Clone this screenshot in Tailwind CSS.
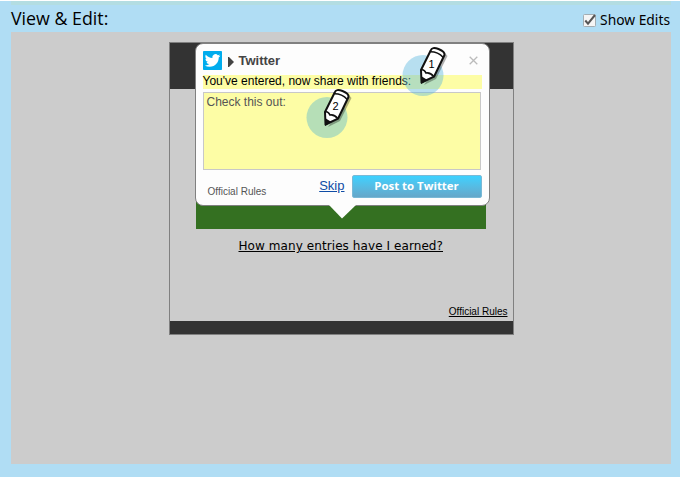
<!DOCTYPE html>
<html lang="en">
<head>
<meta charset="utf-8">
<title>View &amp; Edit</title>
<script src="https://cdn.jsdelivr.net/npm/@tailwindcss/browser@4"></script>
</head>
<body class="h-[477px] w-[681px] overflow-hidden bg-white pt-px text-black">
<main class="h-[476px] w-[680px] bg-[#b0ddf4] pr-[9px] pl-[11px]">
  <div class="h-1 bg-[#b3dde2]"></div>
  <header class="flex h-[27px] items-start justify-between whitespace-nowrap font-['Open_Sans',sans-serif]">
    <h1 class="text-[17.8px] leading-[26px]">View &amp; Edit:</h1>
    <label class="flex items-center gap-[3px] pt-[5px] pr-px font-['Noto_Sans',sans-serif] text-[13.8px] leading-5">
      <svg class="h-[15px] w-[15px]" viewBox="0 0 15 15"><rect x="1.5" y="1.5" width="12" height="12" rx="1" fill="#f5f5f5" stroke="#a3adb2"/><path d="M3.3 7.5 6 10.7 13 2" fill="none" stroke="#555" stroke-width="2"/></svg>
      <span>Show Edits</span>
    </label>
  </header>
  <section class="flex h-[432px] justify-center bg-[#ccc] pt-[10px] pr-[1px]">
    <div class="relative ml-[3px] flex h-[293px] w-[345px] -translate-x-px flex-col border border-[#808080]">
      <div class="h-[46px] shrink-0 bg-[#333]"></div>
      <div class="flex grow flex-col">
        <div class="mt-[104px] ml-[26px] h-[36px] w-[290px] shrink-0 bg-[#347021]"></div>
        <a class="mt-[9px] ml-[69px] whitespace-nowrap font-['DejaVu_Sans',sans-serif] text-[12px] leading-[17px] tracking-[0.08px] underline underline-offset-1">How many entries have I earned?</a>
        <a class="mt-auto mr-[5px] mb-[3px] self-end whitespace-nowrap font-['Liberation_Sans',sans-serif] text-[10px] leading-3 underline">Official Rules</a>
      </div>
      <div class="h-[13px] shrink-0 bg-[#333]"></div>

      <!-- Share bubble -->
      <div class="absolute top-0 left-[25px] flex h-[163px] w-[295px] flex-col rounded-[8px] border border-[#808080] bg-[#fdfdfd] px-[7px] pt-[7px] font-['Liberation_Sans',sans-serif]">
        <div class="flex h-[19px] shrink-0 items-center">
          <svg class="h-[19px] w-[19px]" viewBox="0 0 24 24"><rect width="24" height="24" rx="1" fill="#00aced"/><path transform="translate(2.2 2.2) scale(.82)" fill="#fff" d="M23.95 4.57a10 10 0 0 1-2.82.77 4.96 4.96 0 0 0 2.16-2.72c-.95.55-2 .95-3.13 1.18a4.92 4.92 0 0 0-8.38 4.48C7.69 8.09 4.07 6.13 1.64 3.16a4.82 4.82 0 0 0-.67 2.48c0 1.71.87 3.21 2.19 4.1a4.9 4.9 0 0 1-2.23-.62v.06a4.92 4.92 0 0 0 3.95 4.83 5 5 0 0 1-2.21.08 4.94 4.94 0 0 0 4.6 3.42A9.87 9.87 0 0 1 0 19.54a14 14 0 0 0 7.55 2.21c9.05 0 14-7.5 14-13.98 0-.21 0-.42-.02-.63a9.94 9.94 0 0 0 2.42-2.57z"/></svg>
          <svg class="mt-[2px] ml-[6px] h-[10px] w-[6px]" viewBox="0 0 6 10"><path d="M0 0H1L6 5 1 10H0z" fill="#444"/></svg>
          <span class="ml-[5px] text-[13px] leading-[19px] font-bold text-[#444]">Twitter</span>
          <svg class="mr-[4px] ml-auto h-[9px] w-[9px]" viewBox="0 0 9 9"><path d="M.7.7 8.3 8.3M8.3.7.7 8.3" stroke="#bbb" stroke-width="1.3"/></svg>
        </div>
        <p class="mt-[5px] h-[14px] w-[279px] shrink-0 whitespace-nowrap bg-[#fdfda5] text-[12px] leading-[13px]">You've entered, now share with friends:</p>
        <div class="mt-[3px] h-[78px] w-[278px] shrink-0 whitespace-nowrap border border-[#c8c8c8] bg-[#fdfda5] px-[3px] pt-[1px] text-[12px] leading-[16px] text-[#555]">Check this out:</div>
        <div class="mt-[5px] flex h-[23px] w-[279px] whitespace-nowrap">
          <span class="ml-[5px] pt-[10px] text-[10px] leading-[13px] text-[#555]">Official Rules</span>
          <a class="mr-[7px] ml-auto pt-px text-[13px] leading-[20px] text-[#0f4ca5] underline">Skip</a>
          <button class="h-[23px] w-[130px] rounded-[2px] border border-[#79b9d6] bg-linear-to-b from-[#3ad1ff] to-[#64a7c9] pb-[2px] font-['Open_Sans',sans-serif] text-[11.4px] leading-[18px] font-bold text-white">Post to Twitter</button>
        </div>
        <svg class="absolute top-[161px] left-[132px] h-[15px] w-[28px]" viewBox="0 0 28 15"><path d="M1 0h27L14 13.5z" fill="#fdfdfd"/></svg>
      </div>

      <!-- Edit markers -->
      <svg class="absolute top-[2px] left-[232px] h-[52px] w-[46px]" viewBox="0 0 46 52">
        <circle cx="21" cy="30.5" r="20.5" fill="#5bb7df" fill-opacity=".43"/>
        <path d="M43 8 45.5 11 34 34 22 40z" fill="#000" opacity=".3"/>
        <path d="M19.5 37.5 19 25 28.7 5.500Q30 1.500 36.500 4T42.500 10L32 31.700z" fill="#fff" stroke="#111" stroke-width="2" stroke-linejoin="round"/>
        <path d="M28.500 6.800Q36 6.800 41.300 12.500M19 25Q22 24 24 28 28 27 32 31.700" fill="none" stroke="#111" stroke-width="1.6"/>
        <path d="M19 39 19 31 25.500 35z" fill="#111"/>
        <text x="26.5" y="22.5" font-size="11" font-family="Liberation Sans">1</text>
      </svg>
      <svg class="absolute top-[44px] left-[136px] h-[52px] w-[46px]" viewBox="0 0 46 52">
        <circle cx="21" cy="30.5" r="20.5" fill="#75c4c7" fill-opacity=".52"/>
        <path d="M43 8 45.5 11 34 34 22 40z" fill="#000" opacity=".3"/>
        <path d="M19.5 37.5 19 25 28.7 5.500Q30 1.500 36.500 4T42.500 10L32 31.700z" fill="#fff" stroke="#111" stroke-width="2" stroke-linejoin="round"/>
        <path d="M28.500 6.800Q36 6.800 41.300 12.500M19 25Q22 24 24 28 28 27 32 31.700" fill="none" stroke="#111" stroke-width="1.6"/>
        <path d="M19 39 19 31 25.500 35z" fill="#111"/>
        <text x="26.5" y="22.5" font-size="11" font-family="Liberation Sans">2</text>
      </svg>
    </div>
  </section>
</main>
</body>
</html>
